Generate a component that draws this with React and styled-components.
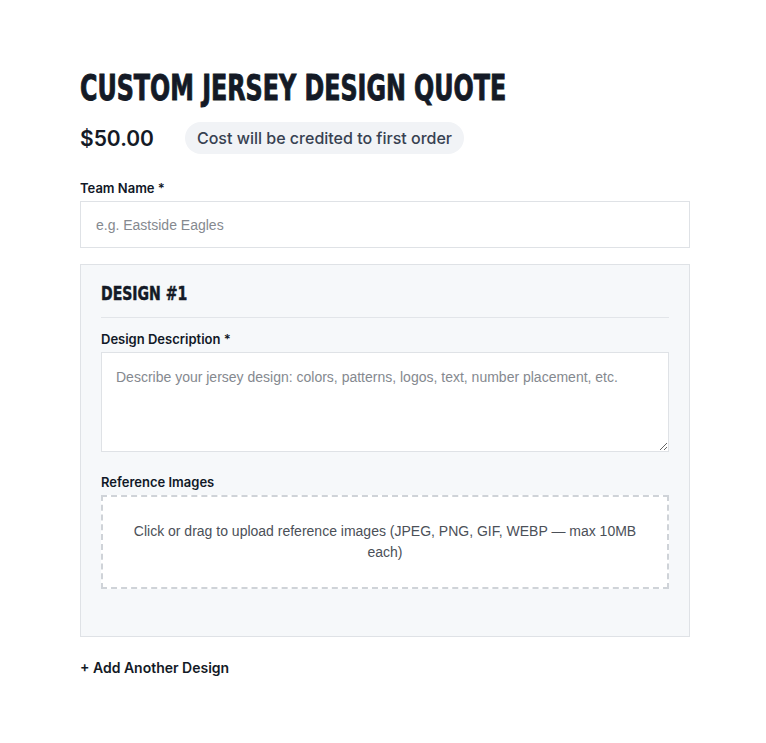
import styled, { createGlobalStyle } from "styled-components";

const GlobalStyle = createGlobalStyle`
  body {
    margin: 0;
    background: #ffffff;
    font-family: Inter, "Noto Sans", sans-serif;
    color: #111827;
  }
`;

const App = () => {
  return (
    <>
      <GlobalStyle />
      <Page>
        <Title>Custom Jersey Design Quote</Title>
        <PriceRow>
          <Price>$50.00</Price>
          <Badge>Cost will be credited to first order</Badge>
        </PriceRow>

        <Field>
          <Label>Team Name *</Label>
          <TextInput placeholder="e.g. Eastside Eagles" />
        </Field>

        <DesignCard>
          <DesignTitle>
            <Squeeze>Design #1</Squeeze>
          </DesignTitle>
          <Field $gap="22px">
            <Label>Design Description *</Label>
            <TextArea placeholder="Describe your jersey design: colors, patterns, logos, text, number placement, etc." />
          </Field>
          <Field $gap="46px">
            <Label>Reference Images</Label>
            <DropZone>
              Click or drag to upload reference images (JPEG, PNG, GIF, WEBP — max 10MB each)
            </DropZone>
          </Field>
        </DesignCard>

        <AddButton type="button">+ Add Another Design</AddButton>
      </Page>
    </>
  );
};

export default App;

const Page = styled.main`
  width: 610px;
  padding: 67px 0 60px 80px;
`;

// condensed display face: squeeze the bold sans horizontally
const Squeeze = styled.span`
  display: inline-block;
  transform: scaleX(0.78);
  transform-origin: left center;
  white-space: nowrap;
`;

const Title = styled.h1`
  margin: 0;
  font-family: "DejaVu Sans Condensed", "DejaVu Sans", sans-serif;
  font-weight: 700;
  font-size: 35px;
  line-height: 42px;
  text-transform: uppercase;
  color: #141a26;
  white-space: nowrap;
  -webkit-text-stroke: 0.9px #141a26;
  transform: scaleX(0.755);
  transform-origin: left center;
`;

const PriceRow = styled.div`
  display: flex;
  align-items: center;
  gap: 31px;
  margin: 13px 0 26px;
`;

const Price = styled.span`
  font-size: 21px;
  font-weight: 600;
  color: #141a26;
`;

const Badge = styled.span`
  background: #f1f3f6;
  color: #374151;
  font-size: 16px;
  font-weight: 500;
  padding: 6px 12px;
  border-radius: 16px;
`;

const Field = styled.div`
  display: flex;
  flex-direction: column;
  gap: 5px;
  margin-bottom: ${(p) => p.$gap || "16px"};
`;

const Label = styled.label`
  font-size: 13px;
  font-weight: 600;
  color: #111827;
`;

const TextInput = styled.input`
  box-sizing: border-box;
  height: 47px;
  padding: 0 15px;
  border: 1px solid #dfe2e6;
  background: #ffffff;
  font-family: "Liberation Sans", Arial, sans-serif;
  font-size: 14px;
  &::placeholder {
    color: #85898f;
  }
`;

const DesignCard = styled.section`
  box-sizing: border-box;
  background: #f6f8fa;
  border: 1px solid #dfe2e6;
  padding: 16px 20px 1px;
`;

const DesignTitle = styled.h2`
  margin: 0 0 13px;
  padding-bottom: 12px;
  border-bottom: 1px solid #e2e5e9;
  font-family: "DejaVu Sans Condensed", "DejaVu Sans", sans-serif;
  font-weight: 700;
  font-size: 20px;
  line-height: 24px;
  text-transform: uppercase;
  color: #141a26;
  -webkit-text-stroke: 0.5px #141a26;
`;

const TextArea = styled.textarea`
  box-sizing: border-box;
  height: 100px;
  padding: 14px 14px;
  border: 1px solid #dfe2e6;
  background: #ffffff;
  font-family: "Liberation Sans", Arial, sans-serif;
  font-size: 14px;
  line-height: 20px;
  resize: vertical;
  &::placeholder {
    color: #85898f;
  }
`;

const DropZone = styled.div`
  box-sizing: border-box;
  height: 94px;
  display: flex;
  align-items: center;
  justify-content: center;
  text-align: center;
  padding: 0 24px;
  border: 2px dashed #cfd3d8;
  background: #ffffff;
  font-family: "Liberation Sans", Arial, sans-serif;
  font-size: 14px;
  line-height: 21px;
  color: #4b5058;
  cursor: pointer;
`;

const AddButton = styled.button`
  margin-top: 22px;
  padding: 0;
  border: none;
  background: none;
  font-family: Inter, "Noto Sans", sans-serif;
  font-size: 14px;
  font-weight: 600;
  color: #141a26;
  cursor: pointer;
`;
